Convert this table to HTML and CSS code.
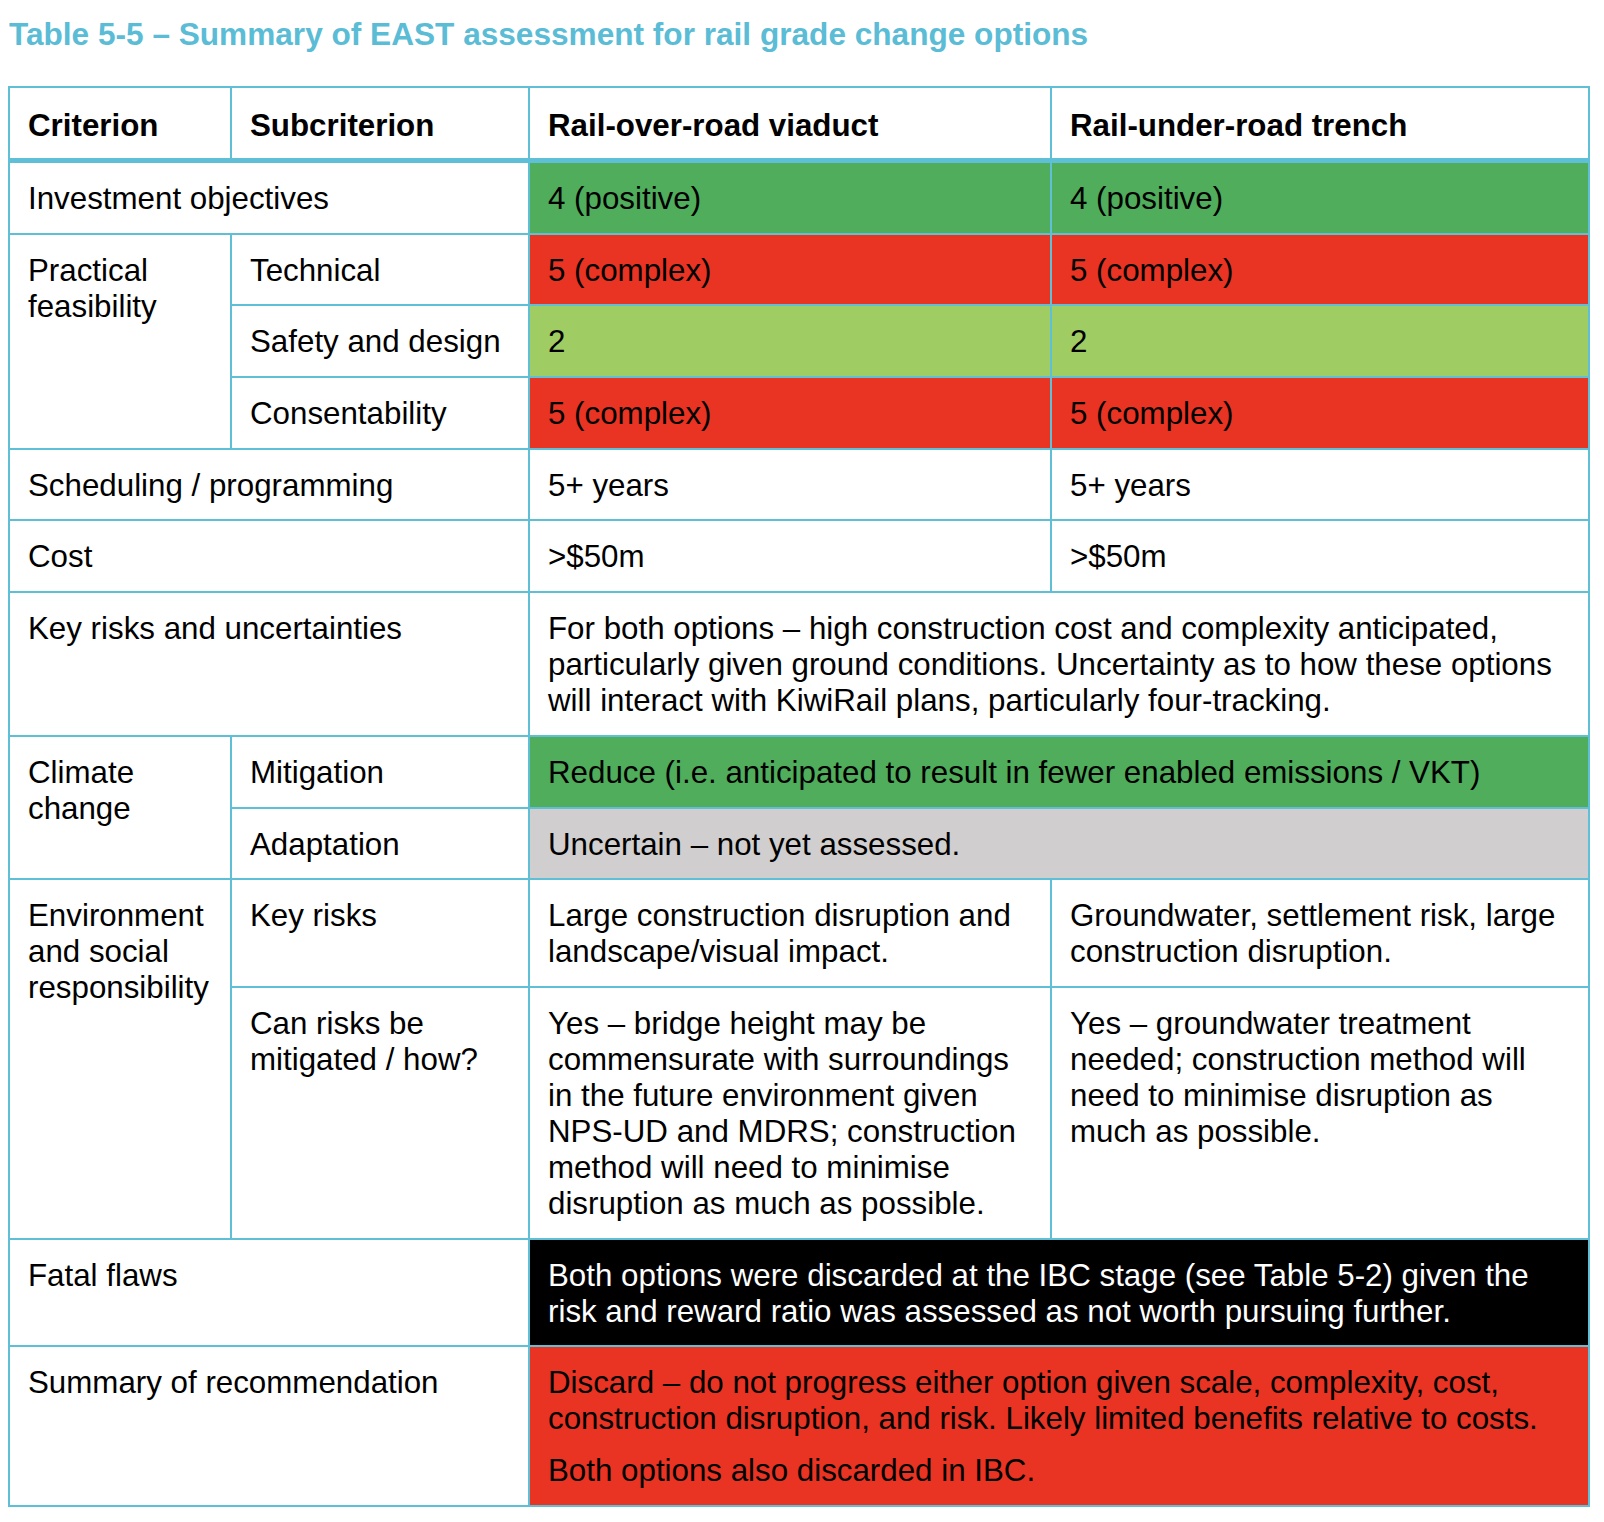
FILE: index.html
```html
<!DOCTYPE html>
<html lang="en">
<head>
<meta charset="utf-8">
<title>Table 5-5</title>
<link rel="stylesheet" href="styles.css">
</head>
<body>
<div class="page">
  <h1 class="caption">Table 5-5 – Summary of EAST assessment for rail grade change options</h1>
  <table class="east">
    <colgroup>
      <col class="c1"><col class="c2"><col class="c3"><col class="c4">
    </colgroup>
    <thead>
      <tr>
        <th>Criterion</th>
        <th>Subcriterion</th>
        <th>Rail-over-road viaduct</th>
        <th>Rail-under-road trench</th>
      </tr>
    </thead>
    <tbody>
      <tr>
        <td colspan="2">Investment objectives</td>
        <td class="green">4 (positive)</td>
        <td class="green">4 (positive)</td>
      </tr>
      <tr>
        <td rowspan="3">Practical feasibility</td>
        <td>Technical</td>
        <td class="red">5 (complex)</td>
        <td class="red">5 (complex)</td>
      </tr>
      <tr>
        <td>Safety and design</td>
        <td class="lime">2</td>
        <td class="lime">2</td>
      </tr>
      <tr>
        <td>Consentability</td>
        <td class="red">5 (complex)</td>
        <td class="red">5 (complex)</td>
      </tr>
      <tr>
        <td colspan="2">Scheduling / programming</td>
        <td>5+ years</td>
        <td>5+ years</td>
      </tr>
      <tr>
        <td colspan="2">Cost</td>
        <td>&gt;$50m</td>
        <td>&gt;$50m</td>
      </tr>
      <tr>
        <td colspan="2">Key risks and uncertainties</td>
        <td colspan="2">For both options – high construction cost and complexity anticipated, particularly given ground conditions. Uncertainty as to how these options will interact with KiwiRail plans, particularly four-tracking.</td>
      </tr>
      <tr>
        <td rowspan="2">Climate change</td>
        <td>Mitigation</td>
        <td colspan="2" class="green">Reduce (i.e. anticipated to result in fewer enabled emissions / VKT)</td>
      </tr>
      <tr>
        <td>Adaptation</td>
        <td colspan="2" class="grey">Uncertain – not yet assessed.</td>
      </tr>
      <tr>
        <td rowspan="2">Environment and social responsibility</td>
        <td>Key risks</td>
        <td>Large construction disruption and landscape/visual impact.</td>
        <td>Groundwater, settlement risk, large construction disruption.</td>
      </tr>
      <tr>
        <td>Can risks be mitigated / how?</td>
        <td>Yes – bridge height may be commensurate with surroundings in the future environment given NPS-UD and MDRS; construction method will need to minimise disruption as much as possible.</td>
        <td>Yes – groundwater treatment needed; construction method will need to minimise disruption as much as possible.</td>
      </tr>
      <tr>
        <td colspan="2">Fatal flaws</td>
        <td colspan="2" class="black">Both options were discarded at the IBC stage (see Table 5-2) given the risk and reward ratio was assessed as not worth pursuing further.</td>
      </tr>
      <tr>
        <td colspan="2">Summary of recommendation</td>
        <td colspan="2" class="red">
          <p>Discard – do not progress either option given scale, complexity, cost, construction disruption, and risk. Likely limited benefits relative to costs.</p>
          <p>Both options also discarded in IBC.</p>
        </td>
      </tr>
    </tbody>
  </table>
</div>
</body>
</html>
```

FILE: styles.css
```css
html, body {
  margin: 0;
  padding: 0;
  background: #ffffff;
}

.page {
  padding: 16px 0 0 8px;
  font-family: "Liberation Sans", Arial, Helvetica, sans-serif;
  color: #000000;
}

.caption {
  margin: 0 0 0 1px;
  font-size: 31.6px;
  line-height: 36px;
  font-weight: bold;
  color: #5bbcd6;
}

.east {
  margin-top: 34px;
  width: 1580px;
  table-layout: fixed;
  border-collapse: collapse;
  font-size: 31.3px;
  line-height: 36px;
}

.c1 { width: 222px; }
.c2 { width: 298px; }
.c3 { width: 522px; }
.c4 { width: 538px; }

.east th,
.east td {
  border: 2px solid #5ebfd6;
  padding: 18px 17px 15.7px 18px;
  text-align: left;
  vertical-align: top;
}

.east th {
  font-weight: bold;
  border-bottom: 5px solid #5ebfd6;
  padding-top: 20px;
  padding-bottom: 14px;
}

.east p {
  margin: 0;
}

.east p + p {
  margin-top: 16px;
}

.green { background: #4fad5b; }
.red { background: #e93323; }
.lime { background: #a0cd63; }
.grey { background: #d0cece; }
.black { background: #000000; color: #ffffff; }
```
